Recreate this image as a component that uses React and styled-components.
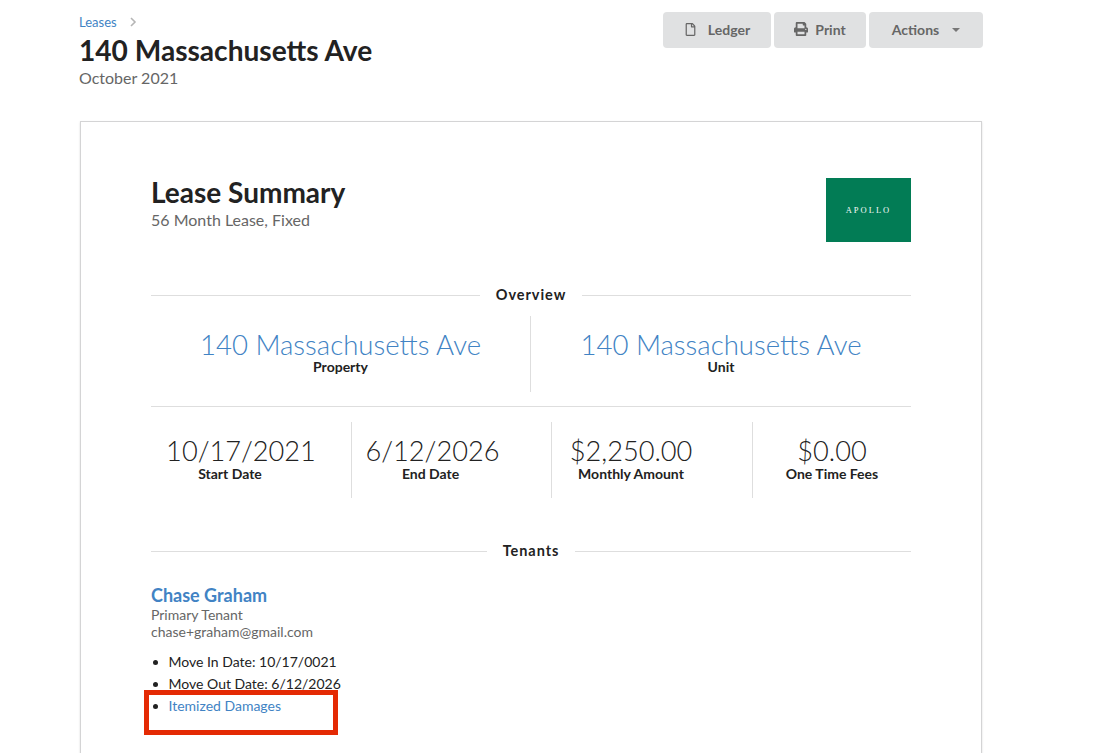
import React from "react";
import styled, { createGlobalStyle } from "styled-components";
import { FaRegFile, FaPrint } from "react-icons/fa";

const Global = createGlobalStyle`
  html, body { margin: 0; padding: 0; height: 100%; overflow: hidden; background: #fff; }
  body { font-family: Lato, "Open Sans", sans-serif; color: #222; -webkit-font-smoothing: antialiased; }
  #root { height: 753px; overflow: hidden; }
`;

const Page = styled.div`
  width: 904px;
  margin-left: 79px;
  padding-top: 12px;
`;
const Header = styled.header`
  display: flex;
  justify-content: space-between;
  align-items: flex-start;
  height: 109px;
`;
const TitleBlock = styled.div`
  display: flex;
  flex-direction: column;
`;
const Crumb = styled.div`
  display: flex;
  align-items: center;
  gap: 12px;
  font-size: 13px;
  line-height: 20px;
  color: #4183c4;
  svg { color: #b5b5b5; }
`;
const Title = styled.h1`
  margin: 0 0 1px;
  font-size: 28.1px;
  line-height: 36px;
  font-weight: 700;
  color: #222;
`;
const Month = styled.div`
  font-size: 16px;
  line-height: 18px;
  color: #666;
`;
const Actions = styled.div`
  display: flex;
  gap: 3px;
`;
const Button = styled.button`
  display: flex;
  align-items: center;
  justify-content: center;
  width: ${(p) => p.$w}px;
  height: 36px;
  padding: 0 0 2px;
  gap: ${(p) => p.$gap}px;
  border: 0;
  border-radius: 4px;
  background: #e0e1e2;
  color: #666;
  font-family: inherit;
  font-size: 14px;
  font-weight: 700;
  svg { flex: none; }
`;
const Caret = styled.span`
  width: 0;
  height: 0;
  border-left: 4px solid transparent;
  border-right: 4px solid transparent;
  border-top: 4px solid #777;
  margin-top: 2px;
`;
const Card = styled.section`
  box-sizing: border-box;
  width: 902px;
  margin-left: 1px;
  height: 760px;
  padding: 56px 70px;
  border: 1px solid #d4d4d5;
  box-shadow: 0 1px 2px rgba(34, 36, 38, 0.15);
`;
const SummaryHead = styled.div`
  display: flex;
  justify-content: space-between;
  align-items: flex-start;
  height: 106px;
`;
const SummaryTitle = styled.h2`
  margin: 0 0 2px;
  font-size: 28px;
  line-height: 28px;
  font-weight: 700;
  color: #222;
`;
const SummarySub = styled.div`
  font-size: 16px;
  line-height: 24px;
  color: #666;
`;
const Logo = styled.div`
  display: flex;
  align-items: center;
  justify-content: center;
  width: 85px;
  height: 64px;
  background: #027c55;
  color: #f2f8f5;
  font-family: "Liberation Serif", serif;
  font-size: 8.5px;
  letter-spacing: 2px;
`;
const Divider = styled.div`
  display: flex;
  align-items: center;
  gap: 15.5px;
  height: 20px;
  font-size: 14.5px;
  font-weight: 700;
  letter-spacing: 0.95px;
  color: #222;
  &::before, &::after {
    content: "";
    flex: 1;
    height: 1px;
    margin-top: 2px;
    background: #dedede;
  }
`;
const TopRow = styled.div`
  display: grid;
  grid-template-columns: 380px 380px;
  margin-top: 12px;
  height: 76px;
  padding-bottom: 14px;
  border-bottom: 1px solid #dedede;
`;
const BottomRow = styled.div`
  display: grid;
  grid-template-columns: 201px 200px 201px 158px;
  margin-top: 15px;
  height: 76px;
`;
const Stat = styled.div`
  display: flex;
  flex-direction: column;
  align-items: center;
  box-sizing: border-box;
  padding-right: ${(p) => p.$pr || 0}px;
  padding-top: ${(p) => p.$pt || 0}px;
  &:not(:last-child) { border-right: 1px solid #dedede; }
`;
const Value = styled.div`
  font-size: ${(p) => (p.$link ? 27.6 : 27.2)}px;
  line-height: ${(p) => (p.$link ? 28 : 30)}px;
  font-weight: 300;
  color: ${(p) => (p.$link ? "#4183c4" : "#222")};
  margin-left: ${(p) => p.$ml || 0}px;
  white-space: nowrap;
`;
const Label = styled.div`
  font-size: 14px;
  line-height: 15px;
  font-weight: 700;
  color: #222;
`;
const TenantsDivider = styled(Divider)`
  margin-top: 42px;
`;
const TenantName = styled.a`
  display: block;
  margin-top: 24px;
  font-size: 18px;
  line-height: 22px;
  font-weight: 700;
  color: #4183c4;
`;
const Muted = styled.div`
  font-size: 14px;
  line-height: 17px;
  color: #666;
`;
const List = styled.ul`
  position: relative;
  margin: 11px 0 0;
  padding-left: 17.5px;
  font-size: 14px;
  line-height: 22px;
  color: #222;
`;
const LinkText = styled.a`
  color: #4183c4;
`;
const Highlight = styled.div`
  position: absolute;
  left: -7px;
  top: 39px;
  width: 194px;
  height: 45px;
  box-sizing: border-box;
  border: 5px solid #e42a04;
`;
const Chevron = () => (
  <svg width="8" height="10" viewBox="0 0 8 10" fill="none" stroke="currentColor" strokeWidth="1.6">
    <path d="M2 1l4 4-4 4" />
  </svg>
);

export default function App() {
  return (
    <Page>
      <Global />
      <Header>
        <TitleBlock>
          <Crumb>Leases <Chevron /></Crumb>
          <Title>140 Massachusetts Ave</Title>
          <Month>October 2021</Month>
        </TitleBlock>
        <Actions>
          <Button $w={108} $gap={11}><FaRegFile size={13} />Ledger</Button>
          <Button $w={92} $gap={7}><FaPrint size={14} />Print</Button>
          <Button $w={114} $gap={13}>Actions<Caret /></Button>
        </Actions>
      </Header>
      <Card>
        <SummaryHead>
          <div>
            <SummaryTitle>Lease Summary</SummaryTitle>
            <SummarySub>56 Month Lease, Fixed</SummarySub>
          </div>
          <Logo>APOLLO</Logo>
        </SummaryHead>
        <Divider>Overview</Divider>
        <TopRow>
          <Stat $pt={15}><Value $link>140 Massachusetts Ave</Value><Label>Property</Label></Stat>
          <Stat $pt={15}><Value $link>140 Massachusetts Ave</Value><Label>Unit</Label></Stat>
        </TopRow>
        <BottomRow>
          <Stat $pr={42} $pt={14}><Value $ml={22}>10/17/2021</Value><Label>Start Date</Label></Stat>
          <Stat $pr={42} $pt={14}><Value $ml={4}>6/12/2026</Value><Label>End Date</Label></Stat>
          <Stat $pr={42} $pt={14}><Value>$2,250.00</Value><Label>Monthly Amount</Label></Stat>
          <Stat $pt={14}><Value>$0.00</Value><Label>One Time Fees</Label></Stat>
        </BottomRow>
        <TenantsDivider>Tenants</TenantsDivider>
        <TenantName>Chase Graham</TenantName>
        <Muted>Primary Tenant</Muted>
        <Muted>chase+graham@gmail.com</Muted>
        <List>
          <li>Move In Date: 10/17/0021</li>
          <li>Move Out Date: 6/12/2026</li>
          <li><LinkText>Itemized Damages</LinkText></li>
          <Highlight />
        </List>
      </Card>
    </Page>
  );
}
